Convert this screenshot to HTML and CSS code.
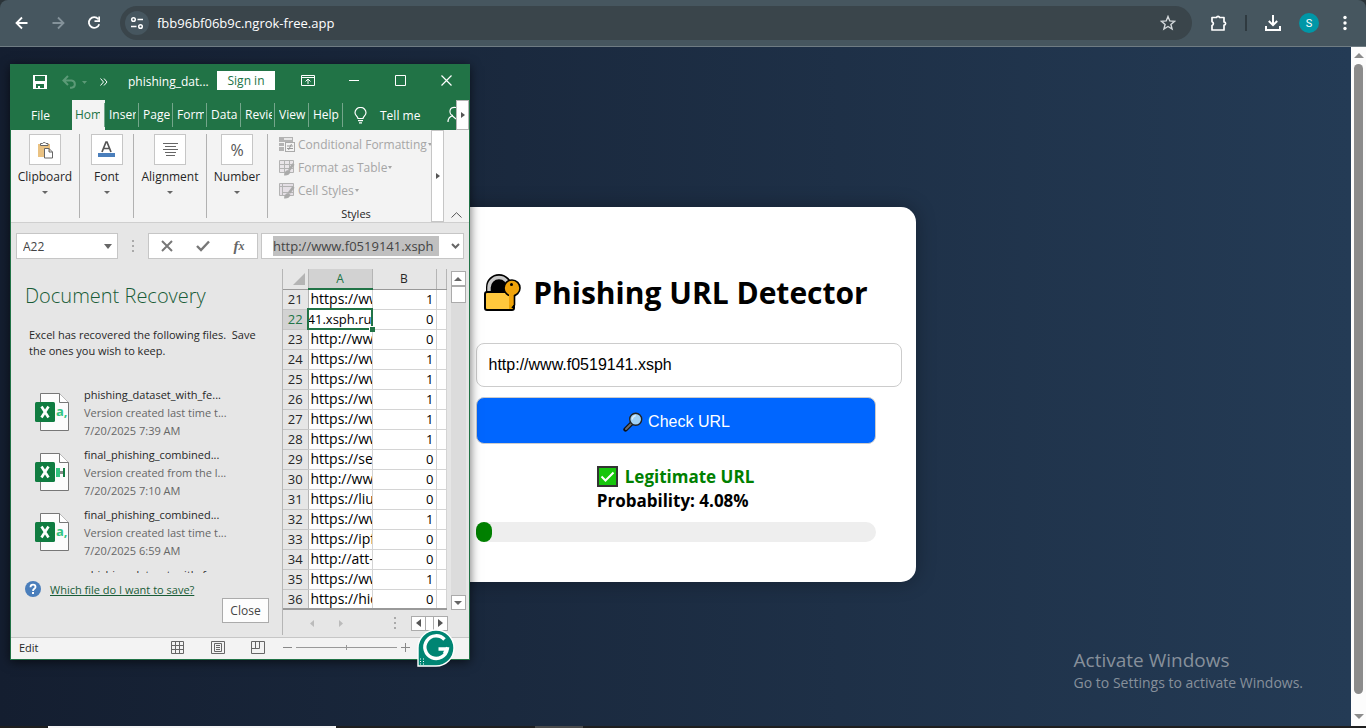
FILE: index.html
```html
<!DOCTYPE html>
<html lang="en">
<head>
<meta charset="utf-8">
<title>Phishing URL Detector</title>
<link rel="stylesheet" href="styles.css">
</head>
<body>
<header class="browser">
  <div class="toolbar">
    <button class="nav-btn" aria-label="Back"><svg width="16" height="16" viewBox="0 0 16 16"><path d="M13.500 8H3M8 2.500 2.500 8 8 13.500" fill="none" stroke="#fff" stroke-width="1.800"/></svg></button>
    <button class="nav-btn" aria-label="Forward"><svg width="16" height="16" viewBox="0 0 16 16"><path d="M2.500 8H13M8 2.500 13.500 8 8 13.500" fill="none" stroke="#84929a" stroke-width="1.800"/></svg></button>
    <button class="nav-btn" aria-label="Reload"><svg width="16" height="16" viewBox="0 0 16 16"><path d="M12.300 4.200A5.300 5.300 0 1 0 13.200 9.200" fill="none" stroke="#fff" stroke-width="1.800"/><path d="M14 1.500V7H8.500V5.300H12.300V1.500z" fill="#fff"/></svg></button>
    <div class="omnibox">
      <button class="site-info" aria-label="Site information"><svg width="14" height="14" viewBox="0 0 14 14" fill="none" stroke="#fff" stroke-width="1.500"><circle cx="3.500" cy="3.500" r="1.800"/><path d="M7.500 3.500H13M1 10.500H6.500"/><circle cx="10.500" cy="10.500" r="1.800"/></svg></button>
      <input class="address" aria-label="Address" value="fbb96bf06b9c.ngrok-free.app">
      <button class="nav-btn" aria-label="Bookmark"><svg width="16" height="16" viewBox="0 0 16 16"><path d="M8 1.500 9.800 5.900 14.600 6.300 10.900 9.400 12.100 14 8 11.500 3.900 14 5.100 9.400 1.400 6.300 6.200 5.900z" fill="none" stroke="#d4d9dc" stroke-width="1.400"/></svg></button>
    </div>
    <div class="tools">
      <button class="nav-btn" aria-label="Extensions"><svg width="18" height="18" viewBox="0 0 18 18"><path d="M2 3.500H6.500A1.600 1.600 0 0 1 9.600 3.500H14V8A1.600 1.600 0 0 1 14 11.200V16H2V11.500A2 2 0 0 0 2 7.700z" fill="none" stroke="#fff" stroke-width="1.700" stroke-linejoin="round"/></svg></button>
      <span class="sep"></span>
      <button class="nav-btn" aria-label="Downloads"><svg width="18" height="18" viewBox="0 0 18 18"><path d="M9 1V11M4.800 7 9 11.200 13.200 7M2 12V16H16V12" fill="none" stroke="#fff" stroke-width="2"/></svg></button>
      <button class="avatar">S</button>
      <button class="nav-btn" aria-label="Menu"><svg width="6" height="16" viewBox="0 0 6 16" fill="#fff"><circle cx="3" cy="2.500" r="1.700"/><circle cx="3" cy="8" r="1.700"/><circle cx="3" cy="13.500" r="1.700"/></svg></button>
    </div>
  </div>
</header>

<div class="viewport">
  <main class="page">
    <section class="card">
      <h1 class="title"><svg width="38" height="38" viewBox="0 0 38 38"><path d="M5 18V13A11 11 0 0 1 27 13V18z" fill="#000" stroke="#000" stroke-width="4"/><path d="M6 19V13.500A10 10 0 0 1 26 13.500V19" fill="none" stroke="#c9c9c9" stroke-width="3.400"/><path d="M9 19V14A7 7 0 0 1 23 14V19z" fill="#000"/><rect x="2" y="18" width="29" height="18" rx="2" fill="#ffc83d" stroke="#000" stroke-width="2"/><path d="M26 20H30V35H26z" fill="#e8a200"/><circle cx="29" cy="14" r="8" fill="#f0a30a" stroke="#000" stroke-width="1.600"/><path d="M26 20H31V31H26z" fill="#f0a30a"/><path d="M31.500 21V31L29 34" fill="none" stroke="#000" stroke-width="1.600"/><circle cx="28.500" cy="10.500" r="1.500" fill="#000"/></svg><span>Phishing URL Detector</span></h1>
      <form class="form">
        <input class="url" aria-label="URL" value="http://www.f0519141.xsph">
        <button class="check" type="button"><svg width="20" height="20" viewBox="0 0 20 20"><path d="M2.500 17.500 9 11" stroke="#111" stroke-width="4.400" stroke-linecap="round"/><path d="M3 17 8.500 11.500" stroke="#6b6b6b" stroke-width="2" stroke-linecap="round"/><circle cx="12.700" cy="7.300" r="6" fill="#9fd0f5" stroke="#222" stroke-width="1.400"/><path d="M9.300 7.500A3.500 3.500 0 0 1 12.700 3.800" stroke="#dceefb" stroke-width="1.400" fill="none"/></svg><span>Check URL</span></button>
      </form>
      <div class="result">
        <div class="verdict"><svg width="22" height="22" viewBox="0 0 22 22"><rect x="1" y="1" width="19" height="19" fill="#16c60c" stroke="#333" stroke-width="2"/><path d="M4.500 10.500 8.500 14.500 16.500 6.500" fill="none" stroke="#fff" stroke-width="2"/></svg><span>Legitimate URL</span></div>
        <div>Probability: 4.08%</div>
      </div>
      <div class="meter"><div class="fill" style="width:4.08%"></div></div>
    </section>
  </main>
  <div class="scrollbar"><i class="up"></i><i class="thumb"></i><i class="down"></i></div>
</div>
<footer class="taskbar"><i class="task-a"></i><i class="task-b"></i></footer>

<aside class="watermark"><div class="wm-big">Activate Windows</div><div>Go to Settings to activate Windows.</div></aside>

<section class="excel">
  <div class="x-title">
    <button class="x-save" aria-label="Save"><svg width="14" height="14" viewBox="0 0 14 14"><path d="M0 0H14V14H0zM2 1V6H12V1zM3 9V13H5V11H7V13H11V9z" fill="#fff" fill-rule="evenodd"/></svg></button>
    <button class="x-undo" aria-label="Undo"><svg width="26" height="14" viewBox="0 0 26 14"><path d="M6 1 1.500 5.500 6 10M2 5.500H9.500A4 3.700 0 0 1 9.500 12.800H8" fill="none" stroke="#5c9a77" stroke-width="2"/><path d="M20 6H25L22.500 9z" fill="#5c9a77"/></svg></button>
    <button class="x-more" aria-label="More commands"><svg width="8" height="8" viewBox="0 0 8 8"><path d="M.5.500 3.500 4 .5 7.500M4 .5 7 4 4 7.500" fill="none" stroke="#fff"/></svg></button>
    <span class="x-name">phishing_dat...</span>
    <button class="x-sign">Sign in</button>
    <div class="x-win">
      <button aria-label="Ribbon options"><svg width="14" height="11" viewBox="0 0 14 11" fill="none" stroke="#fff"><path d="M.5.500H13.500V10.500H.5zM0 2.500H14M7 9V4M4.500 6.500 7 4 9.500 6.500"/></svg></button>
      <button aria-label="Minimize"><svg width="11" height="11" viewBox="0 0 11 11"><path d="M0 5.500H10" stroke="#fff"/></svg></button>
      <button aria-label="Maximize"><svg width="11" height="11" viewBox="0 0 11 11"><path d="M.5.500H10.500V10.500H.5z" fill="none" stroke="#fff"/></svg></button>
      <button aria-label="Close window"><svg width="11" height="11" viewBox="0 0 11 11"><path d="M.5.500 10.500 10.500M10.500.500.500 10.500" stroke="#fff" stroke-width="1.200"/></svg></button>
    </div>
  </div>
  <nav class="x-tabs">
    <button class="file">File</button>
    <button class="tab on"><span>Home</span></button>
    <button class="tab"><span>Insert</span></button>
    <button class="tab"><span>Page</span></button>
    <button class="tab"><span>Formulas</span></button>
    <button class="tab"><span>Data</span></button>
    <button class="tab"><span>Review</span></button>
    <button class="tab"><span>View</span></button>
    <button class="tab"><span>Help</span></button>
    <button class="tell"><svg width="13" height="17" viewBox="0 0 13 17" fill="none" stroke="#fff" stroke-width="1.200"><path d="M4 11.500C4 9.500 1 8.500 1 5.700A5.300 5.100 0 0 1 12 5.700C12 8.500 9 9.500 9 11.500zM4 13.700H9M5 15.900H8"/></svg>Tell me</button>
    <svg class="share" width="9" height="17" viewBox="0 0 9 17" fill="none" stroke="#fff" stroke-width="1.200"><path d="M9 1.500C1 0 2 9 6 9.500M6 9.500Q1 11 1 16M5.500 10 9 13"/></svg>
    <button class="tab-next" aria-label="More tabs"><svg width="4" height="6" viewBox="0 0 4 6"><path d="M0 0 4 3 0 6z" fill="#555"/></svg></button>
  </nav>
  <div class="ribbon">
    <button class="group g1"><span class="tile"><svg width="16" height="18" viewBox="0 0 16 18"><path d="M1 3H13V16H1z" fill="#eac282"/><path d="M3.500 4.500V2.500H5.500A2 2 0 0 1 9 2.500H11V4.500z" fill="#fff" stroke="#666"/><path d="M7.500 7.500H12L15.500 11V17H7.500zM12 7.500V11H15.500" fill="#fff" stroke="#666"/></svg></span>Clipboard<i class="caret"></i></button>
    <button class="group g2"><span class="tile"><svg width="17" height="17" viewBox="0 0 17 17"><path d="M4 11 8 1H9L13 11M5.500 7.500H11.500" fill="none" stroke="#555" stroke-width="1.700"/><rect x="0" y="12" width="17" height="4" fill="#4a7ebb"/></svg></span>Font<i class="caret"></i></button>
    <button class="group g3"><span class="tile"><svg width="15" height="13" viewBox="0 0 15 13" stroke="#666"><path d="M0 .5H15M2 3.500H13M0 6.500H15M2 9.500H13M3 12.500H12"/></svg></span>Alignment<i class="caret"></i></button>
    <button class="group g4"><span class="tile pct">%</span>Number<i class="caret"></i></button>
    <div class="styles">
      <button><svg width="16" height="16" viewBox="0 0 16 16"><path d="M0 0H14V5H0zM0 6H5V9H0zM0 10H5V14H0z" fill="#b3b3b3"/><path d="M5 1H13V3H5z" fill="#e7e7e7"/><rect x="6.500" y="5.500" width="9" height="9" fill="#f4f4f4" stroke="#aaa"/><path d="M8 9H14M8 11.500H14M12.500 7 9.500 13" stroke="#999"/></svg>Conditional Formatting<i class="caret"></i></button>
      <button><svg width="16" height="16" viewBox="0 0 16 16"><path d="M.5.500H14.500V12.500H.5zM.5 4.500H14.500M.5 8.500H14.500M5.500.500V12.500M10.500.500V12.500" fill="#e9e5e9" stroke="#b3b3b3"/><path d="M14.500 4 10 10" stroke="#aaa" stroke-width="2.600"/><path d="M9.500 10Q5 10.500 5 15.500 10 16 11.500 12z" fill="#aaa"/></svg>Format as Table<i class="caret"></i></button>
      <button><svg width="16" height="16" viewBox="0 0 16 16"><path d="M.5.500H14.500V12.500H.5zM.5 3.500H14.500M3.500.500V12.500M3.500 9.500H14" fill="#e4dfe5" stroke="#b3b3b3"/><path d="M14.500 4 10 10" stroke="#aaa" stroke-width="2.600"/><path d="M9.500 10Q5 10.500 5 15.500 10 16 11.500 12z" fill="#aaa"/></svg>Cell Styles<i class="caret"></i></button>
      <div class="styles-label">Styles</div>
    </div>
    <button class="rib-next" aria-label="Scroll ribbon"><svg width="4" height="6" viewBox="0 0 4 6"><path d="M0 0 4 3 0 6z" fill="#555"/></svg></button>
    <button class="rib-up" aria-label="Collapse ribbon"><svg width="11" height="6" viewBox="0 0 11 6"><path d="M.5 5.500 5.500.700 10.500 5.500" fill="none" stroke="#555"/></svg></button>
  </div>
  <div class="formula">
    <div class="namebox"><input aria-label="Name box" value="A22"><i class="caret big"></i></div>
    <svg class="dots" width="3" height="12" viewBox="0 0 3 12" fill="#aaa"><path d="M0 0H2V2H0zM0 5H2V7H0zM0 10H2V12H0z"/></svg>
    <div class="fx">
      <button aria-label="Cancel"><svg width="12" height="12" viewBox="0 0 12 12"><path d="M1 1 11 11M11 1 1 11" stroke="#777" stroke-width="2"/></svg></button>
      <button aria-label="Enter"><svg width="14" height="12" viewBox="0 0 14 12"><path d="M1 6 5 10 13 1.500" fill="none" stroke="#777" stroke-width="2.400"/></svg></button>
      <button class="fn" aria-label="Insert function"><b>f</b><small>x</small></button>
    </div>
    <div class="fbar"><input aria-label="Formula bar" value="http://www.f0519141.xsph"><svg width="9" height="6" viewBox="0 0 9 6"><path d="M1 1 4.500 4.500 8 1" fill="none" stroke="#666" stroke-width="2"/></svg></div>
  </div>
  <div class="body">
    <div class="recovery">
      <h2>Document Recovery</h2>
      <p>Excel has recovered the following files.&nbsp; Save<br>the ones you wish to keep.</p>
      <ul class="files">
        <li><svg width="35" height="39" viewBox="0 0 35 39"><path d="M5.500.500H24.500L33.500 9.500V37.500H5.500z" fill="#fcfcfc" stroke="#777"/><path d="M24.500.500V9.500H33.500" fill="#fff" stroke="#777"/><rect y="9" width="20" height="20" rx="1.500" fill="#107c41"/><path d="M6.500 13.500 13.500 24.500M13.500 13.500 6.500 24.500" stroke="#fff" stroke-width="2.600"/><text class="csv" x="21" y="23">a,</text></svg><div><b>phishing_dataset_with_fe...</b><span>Version created last time t...</span><span>7/20/2025 7:39 AM</span></div></li>
        <li><svg width="35" height="39" viewBox="0 0 35 39"><path d="M5.500.500H24.500L33.500 9.500V37.500H5.500z" fill="#fcfcfc" stroke="#777"/><path d="M24.500.500V9.500H33.500" fill="#fff" stroke="#777"/><rect y="9" width="20" height="20" rx="1.500" fill="#107c41"/><path d="M6.500 13.500 13.500 24.500M13.500 13.500 6.500 24.500" stroke="#fff" stroke-width="2.600"/><path d="M21 15H25V24H21z" fill="#33c481"/><path d="M25 18H28V21H25z" fill="#888"/><path d="M28 15H30V24H28z" fill="#107c41"/></svg><div><b>final_phishing_combined...</b><span>Version created from the l...</span><span>7/20/2025 7:10 AM</span></div></li>
        <li><svg width="35" height="39" viewBox="0 0 35 39"><path d="M5.500.500H24.500L33.500 9.500V37.500H5.500z" fill="#fcfcfc" stroke="#777"/><path d="M24.500.500V9.500H33.500" fill="#fff" stroke="#777"/><rect y="9" width="20" height="20" rx="1.500" fill="#107c41"/><path d="M6.500 13.500 13.500 24.500M13.500 13.500 6.500 24.500" stroke="#fff" stroke-width="2.600"/><text class="csv" x="21" y="23">a,</text></svg><div><b>final_phishing_combined...</b><span>Version created last time t...</span><span>7/20/2025 6:59 AM</span></div></li>
        <li class="last"><div><b>phishing_dataset_with_fe...</b></div></li>
      </ul>
      <div class="help"><svg width="16" height="16" viewBox="0 0 16 16"><circle cx="8" cy="8" r="8" fill="#4a7ebb"/><path d="M5.500 6.200C5.500 2.800 10.500 3 10.500 6 10.500 7.900 8 7.800 8 9.900" fill="none" stroke="#fff" stroke-width="1.800"/><rect x="7" y="11" width="2" height="2" fill="#fff"/></svg><a href="#">Which file do I want to save?</a></div>
      <button class="close">Close</button>
    </div>
    <div class="sheet">
      <div class="sheet-main">
        <table class="grid">
          <colgroup><col class="c0"><col class="c1"><col class="c1"><col class="c3"></colgroup>
          <thead><tr><th class="corner"><svg width="12" height="12" viewBox="0 0 12 12"><path d="M12 0V12H0z" fill="#b4b4b4"/></svg></th><th class="sel">A</th><th>B</th><th></th></tr></thead>
          <tbody>
            <tr><th>21</th><td><div>https://www</div></td><td>1</td><td></td></tr>
            <tr class="cur"><th>22</th><td><div>41.xsph.ru</div><i class="handle"></i></td><td>0</td><td></td></tr>
            <tr><th>23</th><td><div>http://www</div></td><td>0</td><td></td></tr>
            <tr><th>24</th><td><div>https://www</div></td><td>1</td><td></td></tr>
            <tr><th>25</th><td><div>https://www</div></td><td>1</td><td></td></tr>
            <tr><th>26</th><td><div>https://www</div></td><td>1</td><td></td></tr>
            <tr><th>27</th><td><div>https://www</div></td><td>1</td><td></td></tr>
            <tr><th>28</th><td><div>https://www</div></td><td>1</td><td></td></tr>
            <tr><th>29</th><td><div>https://se</div></td><td>0</td><td></td></tr>
            <tr><th>30</th><td><div>http://www</div></td><td>0</td><td></td></tr>
            <tr><th>31</th><td><div>https://liu</div></td><td>0</td><td></td></tr>
            <tr><th>32</th><td><div>https://www</div></td><td>1</td><td></td></tr>
            <tr><th>33</th><td><div>https://ipf</div></td><td>0</td><td></td></tr>
            <tr><th>34</th><td><div>http://att-</div></td><td>0</td><td></td></tr>
            <tr><th>35</th><td><div>https://www</div></td><td>1</td><td></td></tr>
            <tr><th>36</th><td><div>https://hid</div></td><td>0</td><td></td></tr>
          </tbody>
        </table>
        <div class="vscroll"><button aria-label="Scroll up"><svg width="8" height="4" viewBox="0 0 8 4"><path d="M0 4 4 0 8 4z" fill="#666"/></svg></button><i></i><button class="end" aria-label="Scroll down"><svg width="8" height="4" viewBox="0 0 8 4"><path d="M0 0H8L4 4z" fill="#666"/></svg></button></div>
      </div>
      <div class="sheet-nav">
        <svg class="pn" width="34" height="7" viewBox="0 0 34 7" fill="#bbb"><path d="M4 0V7L0 3.500zM29 0V7L33 3.500z"/></svg>
        <svg width="3" height="12" viewBox="0 0 3 12" fill="#aaa"><path d="M0 0H2V2H0zM0 5H2V7H0zM0 10H2V12H0z"/></svg>
        <div class="hscroll"><button aria-label="Scroll left"><svg width="5" height="8" viewBox="0 0 5 8"><path d="M5 0V8L0 4z" fill="#555"/></svg></button><i></i><button aria-label="Scroll right"><svg width="5" height="8" viewBox="0 0 5 8"><path d="M0 0V8L5 4z" fill="#555"/></svg></button></div>
      </div>
    </div>
  </div>
  <div class="status">
    <span class="mode">Edit</span>
    <div class="views">
      <button aria-label="Normal view"><svg width="14" height="13" viewBox="0 0 14 13"><path d="M.5.500H12.500V12.500H.5zM.5 4.500H12.500M.5 8.500H12.500M4.500.500V12.500M8.500.500V12.500" fill="none" stroke="#666"/></svg></button>
      <button aria-label="Page layout"><svg width="14" height="13" viewBox="0 0 14 13"><path d="M.5.500H13.500V12.500H.5zM3.500 2.500H10.500V10.500H3.500zM5 4.500H9M5 6.500H9M5 8.500H9" fill="none" stroke="#666"/></svg></button>
      <button aria-label="Page break"><svg width="14" height="13" viewBox="0 0 14 13"><path d="M.5.500H13.500V12.500H.5zM.5 7.500H8.500V.5M4.500.500V7.500" fill="none" stroke="#666"/></svg></button>
    </div>
    <div class="zoom"><svg width="9" height="9" viewBox="0 0 9 9"><path d="M0 4.500H9" stroke="#888"/></svg><input type="range" aria-label="Zoom" value="50"><svg width="9" height="9" viewBox="0 0 9 9"><path d="M0 4.500H9M4.500 0V9" stroke="#888"/></svg></div>
  </div>
  <svg class="grammarly" width="38" height="38" viewBox="0 0 38 38"><path d="M1 37V19A18 18 0 1 1 19 37z" fill="#008573" stroke="#fff" stroke-width="1.400"/><path d="M27.500 10.500A11.300 11.300 0 1 0 30.300 20H21.500" fill="none" stroke="#fff" stroke-width="3.400"/><path d="M27.300 24.500 30.500 18.500" stroke="#fff" stroke-width="3"/><path d="M3 30H4M6 30H7M3 32.500H4M6 32.500H7M3 35H4M6 35H7" stroke="#fff"/></svg>
</section>
</body>
</html>
```
FILE: styles.css
```css
* { box-sizing: border-box; }
body {
  margin: 0;
  min-height: 100vh;
  display: flex;
  flex-direction: column;
  position: relative;
  overflow: hidden;
  font-family: "Open Sans", "Noto Sans", sans-serif;
  font-size: 12px;
  color: #262626;
}
button, input { font: inherit; color: inherit; background: none; border: 0; padding: 0; margin: 0; outline: 0; min-width: 0; }
button { display: flex; align-items: center; justify-content: center; white-space: nowrap; }
svg { display: block; flex: none; }

/* browser chrome */
.browser { background: #2b3439; }
.toolbar {
  display: flex;
  align-items: center;
  height: 47px;
  padding: 0 3px 0 4px;
  background: #46565f;
  border-bottom: 1px solid #6f7c83;
  border-radius: 8px 8px 0 0;
}
.nav-btn { width: 36px; height: 30px; flex: none; }
.omnibox {
  flex: 1;
  display: flex;
  align-items: center;
  height: 34px;
  margin-left: 8px;
  padding: 0 6px 0 5px;
  border-radius: 17px;
  background: #3a454b;
}
.site-info { width: 24px; height: 24px; border-radius: 12px; background: #46565f; }
.address { flex: 1; margin-left: 8px; font-size: 13px; color: #fff; }
.tools { display: flex; align-items: center; margin-left: 9px; }
.sep { width: 2px; height: 16px; margin: 0 8px; background: #2f3a40; }
.avatar { width: 20px; height: 20px; border-radius: 10px; background: #0097a7; color: #fff; font-family: Roboto, sans-serif; font-size: 11px; margin: 0 8px; }

/* web page */
.viewport { flex: 1; display: flex; }
.page {
  flex: 1;
  display: flex;
  align-items: center;
  justify-content: center;
  padding-top: 16px;
  background: linear-gradient(to right, #141e30, #243b55);
}
.card {
  width: 480px;
  padding: 40px;
  border-radius: 15px;
  background: #fff;
  color: #000;
  box-shadow: 0 0 20px rgba(0, 0, 0, .3);
}
.title {
  display: flex;
  align-items: center;
  justify-content: center;
  gap: 12px;
  margin: 21px 0;
  padding-top: 6px;
  font-size: 30px;
  line-height: 38px;
  white-space: nowrap;
}
.form { display: flex; flex-direction: column; gap: 10px; padding-top: 10px; }
.url {
  width: 426px;
  height: 44px;
  padding: 0 12px;
  border: 1px solid #ccc;
  border-radius: 8px;
  font: 16px "Liberation Sans", sans-serif;
}
.check {
  height: 47px;
  gap: 5px;
  padding: 2px 0 0 2px;
  border: 1px solid #ccc;
  border-radius: 8px;
  background: #0066ff;
  color: #fff;
  font: 16px "Liberation Sans", sans-serif;
}
.result { width: max-content; margin: 21px auto 9px; font-size: 17px; font-weight: 700; line-height: 24px; }
.verdict { display: flex; align-items: center; gap: 6px; color: #008000; }
.meter { height: 20px; border-radius: 10px; background: #eee; }
.fill { height: 20px; border-radius: 10px; background: #008000; }

.scrollbar { width: 15px; display: flex; flex-direction: column; align-items: center; gap: 6px; padding: 6px 0 7px; background: #fcfcfc; }
.scrollbar .thumb { flex: 1; width: 9px; margin-bottom: 14px; border-radius: 5px; background: #8b8b8b; }
.up, .down { border: 5px solid transparent; }
.up { border-top: 0; border-bottom-color: #8b8b8b; }
.down { border-bottom: 0; border-top-color: #8b8b8b; }
.taskbar { display: flex; height: 2px; background: #1f1f1f; }
.task-a { width: 288px; margin-left: 48px; background: #f5f5f5; }
.task-b { width: 48px; margin-left: 199px; background: #4a4a4a; }
.watermark { position: absolute; right: 63px; bottom: 34px; font-size: 14px; line-height: 22px; color: #87909b; white-space: nowrap; }
.wm-big { font-size: 19px; line-height: 24px; }

/* spreadsheet window */
.excel {
  position: absolute;
  left: 10px;
  top: 64px;
  width: 460px;
  display: flex;
  flex-direction: column;
  border: 1px solid #217346;
  background: #e6e6e6;
  box-shadow: 0 2px 10px rgba(0, 0, 0, .6);
}
.x-title { display: flex; align-items: center; height: 35px; padding: 0 0 2px 22px; background: #217346; color: #fff; }
.x-undo { margin-left: 15px; }
.x-more { margin-left: 12px; }
.x-name { margin-left: 20px; flex: 1; }
.x-sign { width: 58px; height: 19px; background: #fff; color: #217346; margin-bottom: 3px; }
.x-win { display: flex; margin-left: 10px; margin-bottom: 3px; }
.x-win button { width: 46px; height: 30px; }
.x-tabs { display: flex; height: 30px; background: #217346; color: #fff; }
.file { width: 61px; padding-right: 2px; }
.tab { position: relative; width: 34px; padding: 0 3px 0 4px; }
.tab::after { content: ""; position: absolute; right: 0; top: 3px; bottom: 3px; width: 1px; background: #74a68b; }
.tab span { flex: 1; overflow: hidden; text-align: left; line-height: 20px; }
.tab.on { width: 33px; padding: 0 5px 0 3px; background: #f3f3f3; color: #217346; }
.tell { gap: 13px; margin-left: 11px; }
.share { margin: 6px 0 0 auto; }
.tab-next { width: 13px; background: #fff; border: 1px solid #b5b5b5; }
.ribbon { display: flex; height: 93px; background: #f3f3f3; border-bottom: 1px solid #cfcfcf; }
.group { flex-direction: column; justify-content: flex-start; margin: 4px 0; border-right: 1px solid #b1b1b1; line-height: 18px; }
.g1 { width: 69px; }
.g2 { width: 54px; }
.g3 { width: 73px; }
.g4 { width: 61px; }
.tile { width: 32px; height: 31px; display: flex; align-items: center; justify-content: center; margin-bottom: 3px; background: #fff; border: 1px solid #c6c6c6; }
.pct { font-size: 16px; color: #555; }
.caret { display: block; margin: 5px 0; border: 3px solid transparent; border-top-color: #666; border-bottom: 0; flex: none; }
.styles { flex: 1; padding: 3px 0 0 11px; color: #a6a6a6; min-width: 0; }
.styles button { height: 23px; }
.styles button svg { margin-right: 3px; }
.styles .caret { border-width: 3px 2px 0; margin-left: 1px; border-top-color: #a6a6a6; }
.styles-label { padding-left: 2px; text-align: center; color: #262626; line-height: 24px; font-size: 11px; }
.rib-next { width: 13px; border: 1px solid #c6c6c6; background: #fff; }
.rib-up { width: 25px; align-items: flex-end; padding-bottom: 4px; }
.formula { display: flex; align-items: center; padding: 10px 5px; height: 46px; }
.formula > div { height: 26px; display: flex; align-items: center; background: #fff; border: 1px solid #c6c6c6; }
.namebox { width: 102px; padding: 0 5px 0 6px; color: #444; }
.namebox input { flex: 1; }
.caret.big { border-width: 5px 4px 0; }
.dots { margin: 0 13px 0 14px; }
.fx { width: 110px; justify-content: space-around; }
.fx button { width: 34px; height: 24px; }
.fn { color: #666; font-family: "Liberation Serif", serif; font-style: italic; }
.fn b { font-size: 15px; }
.fn small { font-size: 12px; font-weight: 700; }
.fbar { flex: 1; margin-left: 3px; padding: 0 3px 0 11px; justify-content: space-between; }
.fbar input { width: 166px; height: 20px; background: #c0c0c0; font-size: 13px; color: #444; }
.body { display: flex; height: 368px; }
.recovery { width: 271px; display: flex; flex-direction: column; padding: 13px 13px 14px 14px; }
.recovery h2 { margin: 0 0 17px; font-size: 20px; font-weight: 300; line-height: 28px; color: #185c37; }
.recovery p { margin: 0 0 27px; padding-left: 4px; font-size: 11px; line-height: 16px; white-space: nowrap; }
.files { flex: 1; min-height: 0; overflow: hidden; margin: 0; padding: 0 0 0 10px; list-style: none; font-size: 11px; line-height: 18px; }
.files li { display: flex; gap: 14px; height: 60px; align-items: flex-start; white-space: nowrap; }
.files svg { margin-top: 7px; }
.files .last { padding-left: 49px; }
.files b { display: block; font-weight: 400; }
.files span { display: block; color: #666; }
.csv { font: 700 13px "Open Sans", sans-serif; fill: #33c481; }
.help { display: flex; align-items: center; gap: 9px; height: 34px; padding-bottom: 2px; font-size: 11px; }
.help a { color: #185c37; }
.close { align-self: flex-end; width: 47px; height: 25px; margin-top: -9px; border: 1px solid #ababab; background: #fdfdfd; color: #444; }
.sheet { flex: 1; margin-bottom: 2px; border-left: 1px solid #b5b5b5; }
.sheet-main { display: flex; width: 183px; }
.grid { width: 163px; table-layout: fixed; border-collapse: collapse; color: #000; background: #fff; border-right: 1px solid #999; border-bottom: 2px solid #999; }
.c0 { width: 25px; }
.c1 { width: 64px; }
.c3 { width: 10px; }
.grid th, .grid td { height: 20px; padding: 0; line-height: 18px; font-weight: 400; }
.grid th { background: #e6e6e6; border-right: 1px solid #b5b5b5; border-bottom: 1px solid #c6c6c6; color: #262626; font-size: 13px; }
.grid thead th { border-bottom: 1px solid #999; font-size: 12px; }
.grid .corner svg { margin-left: 10px; }
.grid thead .sel { background: #d2d2d2; border-bottom: 2px solid #217346; color: #217346; }
.grid td { position: relative; border-right: 1px solid #d4d4d4; border-bottom: 1px solid #d4d4d4; text-align: right; padding-right: 2px; font-size: 13px; }
.grid td div { display: flex; overflow: hidden; white-space: nowrap; padding-left: 2px; margin-right: -2px; font-size: 14px; }
.grid .cur th { background: #d2d2d2; color: #217346; }
.grid .cur td:nth-child(2) { outline: 2px solid #217346; outline-offset: -1px; }
.grid .cur div { padding-left: 0; justify-content: flex-end; font-size: 13px; }
.handle { position: absolute; right: -3px; bottom: -3px; width: 6px; height: 6px; background: #217346; border: solid #fff; border-width: 1px 0 0 1px; }
.vscroll { width: 15px; margin-left: 4px; margin-top: 2px; display: flex; flex-direction: column; background: #dcdcdc; }
.vscroll button, .vscroll i { width: 15px; height: 15px; background: #fff; border: 1px solid #ababab; }
.vscroll i { height: 17px; }
.vscroll .end { margin-top: auto; }
.sheet-nav { display: flex; align-items: center; justify-content: flex-end; height: 26px; padding-right: 21px; }
.pn { margin-right: 50px; }
.hscroll { display: flex; margin-left: 14px; }
.hscroll button, .hscroll i { width: 15px; height: 15px; background: #fff; border: 1px solid #ababab; }
.hscroll i { width: 7px; border-width: 1px 0; }
.status { display: flex; align-items: center; height: 22px; padding: 0 59px 2px 8px; background: #f3f3f3; border-top: 1px solid #c6c6c6; font-size: 11px; }
.mode { flex: 1; }
.views { display: flex; gap: 26px; margin-right: 18px; }
.zoom { display: flex; align-items: center; gap: 4px; }
.zoom input { appearance: none; width: 101px; height: 9px; background: linear-gradient(#999, #999) center / 100% 1px no-repeat; }
.zoom input::-webkit-slider-thumb { appearance: none; width: 1px; height: 5px; background: #999; }
.grammarly { position: absolute; left: 406px; top: 564px; }
```
